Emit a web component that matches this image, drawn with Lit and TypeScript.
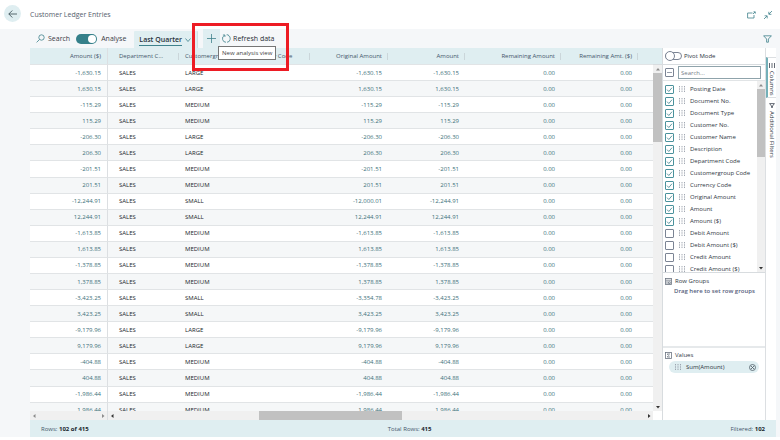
import { LitElement, html, css, svg } from "lit";
import { customElement, property } from "lit/decorators.js";
import { classMap } from "lit/directives/class-map.js";

type Entry = [amount: string, group: string, original?: string];

const PAIRS: Entry[] = [
  ["1,630.15", "LARGE"],
  ["115.29", "MEDIUM"],
  ["206.30", "LARGE"],
  ["201.51", "MEDIUM"],
  ["12,244.91", "SMALL", "-12,000.01"],
  ["1,613.85", "MEDIUM"],
  ["1,378.85", "MEDIUM"],
  ["3,423.25", "SMALL", "-3,354.78"],
  ["9,179.96", "LARGE"],
  ["404.88", "MEDIUM"],
  ["1,986.44", "MEDIUM"],
];

const ROWS = PAIRS.flatMap(([amount, group, original]) => [
  { amount: "-" + amount, group, original: original ?? "-" + amount },
  { amount, group, original: amount },
]);

const FIELDS: [string, boolean][] = [
  ["Posting Date", true],
  ["Document No.", true],
  ["Document Type", true],
  ["Customer No.", true],
  ["Customer Name", true],
  ["Description", true],
  ["Department Code", true],
  ["Customergroup Code", true],
  ["Currency Code", true],
  ["Original Amount", true],
  ["Amount", true],
  ["Amount ($)", true],
  ["Debit Amount", false],
  ["Debit Amount ($)", false],
  ["Credit Amount", false],
  ["Credit Amount ($)", false],
];

const icon = (name: string, w: number, h: number, body: unknown) =>
  html`<svg class="icon ${name}" width=${w} height=${h} viewBox="0 0 ${w} ${h}" aria-hidden="true">${body}</svg>`;

const grip = () =>
  icon("grip", 6, 6, svg`<path d="M.5 0v6M3 0v6M5.5 0v6" stroke-dasharray="1.4 .9" />`);

const shared = css`
  * {
    box-sizing: border-box;
  }
  button,
  input {
    font: inherit;
    color: inherit;
    margin: 0;
    padding: 0;
    border: 0;
    background: none;
  }
  .icon {
    display: block;
    flex: none;
    fill: none;
    stroke: #3f828c;
    stroke-width: 0.8;
  }
  .grip {
    stroke: #8a929e;
  }
`;

@customElement("scroll-bar")
export class ScrollBar extends LitElement {
  static styles = css`
    :host {
      display: flex;
      align-items: center;
      justify-content: space-between;
      background: #f0f0f0;
      min-width: 0;
      min-height: 0;
    }
    :host([vertical]) {
      flex-direction: column;
    }
    .arrow {
      flex: none;
      width: 8px;
      height: 8px;
      fill: #333;
    }
    .track {
      flex: 1;
      align-self: stretch;
      display: flex;
      min-height: 0;
    }
    :host([vertical]) .track {
      flex-direction: column;
    }
    .thumb {
      background: #c1c1c1;
    }
    .faint {
      fill: #8b8b8b;
    }
  `;
  @property({ type: Boolean, reflect: true }) vertical = false;
  @property({ type: Boolean }) idle = false;
  @property({ type: Number }) start = 0;
  @property({ type: Number }) size = 0;

  render() {
    const [a, b] = this.vertical
      ? ["M2 5.5h4L4 3z", "M2 3h4L4 5.5z"]
      : ["M5.5 2v4L3 4z", "M3 2v4l2.500-2z"];
    const arrow = (d: string, faint: boolean) =>
      html`<svg class=${classMap({ arrow: true, faint })} viewBox="0 0 8 8" aria-hidden="true"><path d=${d} /></svg>`;
    return html`
      ${arrow(a, this.idle || this.vertical)}
      <div class="track">
        <div style="flex: 0 0 ${this.start}%"></div>
        <div class="thumb" style="flex: 0 0 ${this.size}%"></div>
      </div>
      ${arrow(b, this.idle)}
    `;
  }
}

@customElement("analysis-toolbar")
export class AnalysisToolbar extends LitElement {
  static styles = [
    shared,
    css`
      :host {
        display: flex;
        align-items: stretch;
        height: 19px;
        padding: 0 8px 0 36px;
        font-size: 7px;
        color: #3c4047;
      }
      button {
        display: flex;
        align-items: center;
        gap: 3px;
      }
      .switch {
        display: flex;
        align-items: center;
        gap: 4px;
        margin: 0 8px 0 6px;
      }
      .toggle {
        appearance: none;
        display: flex;
        justify-content: flex-end;
        align-items: center;
        width: 21px;
        height: 10px;
        padding: 1px;
        border-radius: 5px;
        background: #35808a;
      }
      .toggle::after {
        content: "";
        width: 8px;
        height: 8px;
        border-radius: 50%;
        background: #fff;
      }
      .tab {
        margin: 2px 0 0;
        padding: 0 6px 0 5px;
        background: #dfeef1;
        border-right: 1px solid #d3dee2;
        border-radius: 1px 1px 0 0;
      }
      .name {
        font-weight: 600;
        color: #26303a;
        line-height: 11px;
        border-bottom: 1px solid #3f828c;
      }
      .add {
        position: relative;
        margin-left: 5px;
        width: 17px;
        justify-content: center;
        background: #dfeef1;
      }
      .tip {
        position: absolute;
        left: 15px;
        top: 17px;
        z-index: 2;
        height: 14px;
        padding: 0 3px;
        line-height: 12px;
        white-space: nowrap;
        font-size: 6px;
        color: #444;
        background: #fff;
        border: 1px solid #767676;
      }
      .mark {
        position: absolute;
        left: -11px;
        top: -6px;
        z-index: 3;
        width: 97px;
        height: 48px;
        border: 3px solid #ed1c24;
        pointer-events: none;
      }
      .refresh {
        margin-left: 2px;
        gap: 2px;
        color: #262b33;
      }
      .filter {
        margin-left: auto;
      }
    `,
  ];

  render() {
    return html`
      <button>
        ${icon("find", 9, 9, svg`<circle cx="5.500" cy="3.500" r="2.700" /><path d="M3.500 5.500.6 8.400" />`)}
        Search
      </button>
      <label class="switch"><input class="toggle" type="checkbox" role="switch" checked />Analyse</label>
      <button class="tab">
        <span class="name">Last Quarter</span>
        ${icon("chev", 6, 6, svg`<path d="M.5 1.500 3 4.500l2.500-3" />`)}
      </button>
      <button class="add" aria-label="New analysis view">
        ${icon("plus", 9, 9, svg`<path d="M4.500 0v9M0 4.500h9" />`)}
        <span class="tip" role="tooltip">New analysis view</span>
        <span class="mark"></span>
      </button>
      <button class="refresh">
        ${icon("turn", 9, 9, svg`<path d="M2.500 1.300A3.700 3.700 0 0 0 4 8.300M5 8.300A3.700 3.700 0 0 0 6 1.200M.9 1h2v2M4.600.8h1.700" />`)}
        Refresh data
      </button>
      <button class="filter" aria-label="Filter">
        ${icon("funnel", 9, 8, svg`<path d="M.6.8h7.800L5.400 4v3.200H3.600V4z" />`)}
      </button>
    `;
  }
}

@customElement("ledger-grid")
export class LedgerGrid extends LitElement {
  static styles = [
    shared,
    css`
      :host {
        display: grid;
        grid-template-columns: 78px minmax(0, 1fr) 9px;
        grid-template-rows: 17px minmax(0, 1fr) 9px;
        min-width: 0;
        min-height: 0;
        background: #fff;
      }
      .view {
        grid-area: 1 / 1 / 3 / 3;
        overflow: hidden;
        min-height: 0;
      }
      .corner {
        grid-area: 1 / 3;
        background: #dfeef1;
        border-bottom: 1px solid #d8dcdf;
      }
      .down {
        grid-area: 2 / 3;
      }
      .pinned {
        grid-area: 3 / 1;
        border-right: 1px solid #dcdfe2;
      }
      .across {
        grid-area: 3 / 2;
      }
      table {
        table-layout: fixed;
        border-collapse: separate;
        border-spacing: 0;
        width: 100%;
        height: 371px;
      }
      th,
      td {
        padding: 0 6px;
        text-align: left;
        white-space: nowrap;
        border-bottom: 1px solid #e1e4e6;
      }
      th {
        position: relative;
        height: 17px;
        font-weight: 400;
        color: #44566a;
        background: #dfeef1;
      }
      th::after {
        content: "";
        position: absolute;
        right: 0;
        top: 5px;
        width: 1px;
        height: 7px;
        background: #cbd6da;
      }
      td {
        color: #22262c;
      }
      .num {
        text-align: right;
      }
      td.num {
        color: #3c7079;
      }
      .pin {
        border-right: 1px solid #dcdfe2;
      }
      th.pin::after {
        right: -6px;
      }
      .dept {
        padding-left: 11px;
      }
      th.end::after {
        display: none;
      }
      tbody tr:nth-child(even) {
        background: #f5f7f8;
      }
      .c78 {
        width: 78px;
      }
      .c77 {
        width: 77px;
      }
      .c71 {
        width: 71px;
      }
      .c66 {
        width: 66px;
      }
      .c65 {
        width: 65px;
      }
      .c96 {
        width: 96px;
      }
    `,
  ];

  render() {
    return html`
      <div class="view">
        <table>
          <colgroup>
            <col class="c78" /><col class="c71" /><col class="c66" /><col class="c65" />
            <col class="c78" /><col class="c77" /><col class="c96" /><col class="c77" /><col />
          </colgroup>
          <thead>
            <tr>
              <th class="num pin">Amount ($)</th>
              <th class="dept">Department C...</th>
              <th>Customergroup ...</th>
              <th>Currency Code</th>
              <th class="num">Original Amount</th>
              <th class="num">Amount</th>
              <th class="num">Remaining Amount</th>
              <th class="num">Remaining Amt. ($)</th>
              <th class="end"></th>
            </tr>
          </thead>
          <tbody>
            ${ROWS.map(
              (r) => html`<tr>
                <td class="num pin">${r.amount}</td>
                <td class="dept">SALES</td>
                <td>${r.group}</td>
                <td></td>
                <td class="num">${r.original}</td>
                <td class="num">${r.amount}</td>
                <td class="num">0.00</td>
                <td class="num">0.00</td>
                <td></td>
              </tr>`,
            )}
          </tbody>
        </table>
      </div>
      <div class="corner"></div>
      <scroll-bar class="down" vertical start="0" size="21"></scroll-bar>
      <scroll-bar class="pinned" idle></scroll-bar>
      <scroll-bar class="across" start="27" size="27"></scroll-bar>
    `;
  }
}

@customElement("field-panel")
export class FieldPanel extends LitElement {
  static styles = [
    shared,
    css`
      :host {
        display: flex;
        width: 114px;
        flex: none;
        min-height: 0;
        background: #fff;
        color: #2f3743;
        border-left: 1px solid #d8dcdf;
      }
      .body {
        flex: 1;
        min-width: 0;
        display: flex;
        flex-direction: column;
        border-right: 1px solid #dcdfe2;
      }
      .row {
        display: flex;
        align-items: center;
      }
      .pivot {
        height: 17px;
        flex: none;
        padding-left: 2px;
        gap: 2px;
        border-bottom: 1px solid #d8dcdf;
      }
      .toggle {
        appearance: none;
        width: 17px;
        height: 8px;
        border: 1px solid #7b8494;
        border-radius: 4px;
        display: flex;
        align-items: center;
      }
      .toggle::after {
        content: "";
        width: 8px;
        height: 8px;
        margin-left: -1px;
        flex: none;
        border: 1px solid #7b8494;
        border-radius: 50%;
        background: #fff;
      }
      .search {
        height: 16px;
        flex: none;
        padding: 0 4px 0 2px;
        gap: 4px;
        border-bottom: 1px solid #e1e4e6;
      }
      .query {
        flex: 1;
        min-width: 0;
        height: 13px;
        padding: 0 2px;
        border: 1px solid #8fa3ab;
      }
      .query::placeholder {
        color: #767d87;
        opacity: 1;
      }
      .tick {
        display: grid;
        flex: none;
        width: 9px;
        height: 9px;
      }
      .tick > * {
        grid-area: 1 / 1;
      }
      .box {
        appearance: none;
        width: 9px;
        height: 9px;
        border: 1px solid #7b8494;
        border-radius: 1px;
      }
      .box:checked {
        border-color: #4a929c;
      }
      .mark,
      .dash {
        visibility: hidden;
        pointer-events: none;
      }
      .box:checked + .mark,
      .dash {
        visibility: visible;
      }
      .dash {
        stroke: #7b8494;
      }
      .fields {
        height: 192px;
        flex: none;
        display: flex;
        border-bottom: 1px solid #d8dcdf;
      }
      .list {
        flex: 1;
        min-width: 0;
        overflow: hidden;
        padding: 2px 0 0 2px;
      }
      .field {
        height: 12px;
        gap: 5px;
        white-space: nowrap;
      }
      .bar {
        width: 8px;
        flex: none;
      }
      .zone {
        flex: 1;
        padding: 4px 2px 0;
      }
      .zone + .zone {
        padding-top: 3px;
        border-top: 2px solid #e6e9eb;
      }
      .title {
        height: 8px;
        gap: 3px;
      }
      .title .icon {
        stroke: #6b7480;
      }
      .hint {
        margin: 0;
        padding-left: 9px;
        line-height: 12px;
        font-weight: 600;
        color: #56607c;
      }
      .pill {
        height: 12px;
        margin: 2px 4px 0;
        padding: 0 3px 0 6px;
        gap: 5px;
        border-radius: 6px;
        background: #dfeef1;
      }
      .drop {
        margin-left: auto;
      }
      .drop .icon {
        stroke: #4d5a66;
      }
      .tabs {
        width: 10px;
        flex: none;
        display: flex;
        flex-direction: column;
        padding-top: 9px;
        background: #fff;
      }
      .side {
        display: flex;
        align-items: center;
        gap: 3px;
        writing-mode: vertical-rl;
        width: 10px;
        height: 41px;
        padding-top: 5px;
        border-left: 2px solid transparent;
        border-bottom: 1px solid #dcdfe2;
        white-space: nowrap;
        line-height: 8px;
      }
      .side.on {
        border-left-color: #74b0b8;
        border-top: 1px solid #dcdfe2;
      }
      .side.more {
        height: 62px;
        border-bottom: 0;
      }
      .side .icon {
        stroke: #3c4450;
      }
    `,
  ];

  render() {
    return html`
      <div class="body">
        <label class="row pivot"><input class="toggle" type="checkbox" role="switch" />Pivot Mode</label>
        <div class="row search">
          <label class="tick">
            <input class="box" type="checkbox" aria-label="Select all columns" />
            ${icon("dash", 9, 9, svg`<path d="M2 4.500h5" />`)}
          </label>
          <input class="query" type="text" placeholder="Search..." aria-label="Search columns" />
        </div>
        <div class="fields">
          <div class="list">
            ${FIELDS.map(
              ([name, on]) => html`<label class="row field">
                <span class="tick">
                  <input class="box" type="checkbox" .checked=${on} />
                  ${icon("mark", 9, 9, svg`<path d="m2 4.600 1.800 1.900L7 2.700" />`)}
                </span>
                ${grip()}<span>${name}</span>
              </label>`,
            )}
          </div>
          <scroll-bar class="bar" vertical start="0" size="39"></scroll-bar>
        </div>
        <section class="zone">
          <div class="row title">
            ${icon("group", 7, 7, svg`<rect x=".5" y=".5" width="6" height="6" /><path d="M1 2.200h5M2 3v3M3.500 3.800h1.800v1.700H3.500z" />`)}
            Row Groups
          </div>
          <p class="hint">Drag here to set row groups</p>
        </section>
        <section class="zone">
          <div class="row title">
            ${icon("sum", 7, 7, svg`<rect x=".5" y=".5" width="6" height="6" /><path d="M5 2H2.200l1.500 1.500L2.200 5H5" />`)}
            Values
          </div>
          <div class="row pill">
            ${grip()}<span>Sum(Amount)</span>
            <button class="drop" aria-label="Remove value">
              ${icon("x", 7, 7, svg`<circle cx="3.500" cy="3.500" r="3" /><path d="m2 2 3 3M5 2 2 5" />`)}
            </button>
          </div>
        </section>
      </div>
      <div class="tabs">
        <button class="side on">
          ${icon("cols", 6, 5, svg`<path d="M.5 0v5M3 0v5M5.500 0v5" />`)}Columns
        </button>
        <button class="side more">
          ${icon("tri", 6, 5, svg`<path d="M.6.6h4.800L3.500 3v1.500h-1V3z" />`)}Additional Filters
        </button>
      </div>
    `;
  }
}

@customElement("app-root")
export class AppRoot extends LitElement {
  static styles = [
    shared,
    css`
      :host {
        display: flex;
        flex-direction: column;
        height: 100vh;
        background: #fff;
        font: 6px/8px "Open Sans", "Noto Sans", sans-serif;
      }
      .top {
        display: flex;
        align-items: center;
        height: 29px;
        flex: none;
        padding: 0 8px 0 4px;
      }
      .back {
        display: grid;
        place-items: center;
        width: 17px;
        height: 17px;
        margin-right: 9px;
        margin-bottom: 2px;
        border-radius: 50%;
        background: #dfeef1;
      }
      .back .icon {
        stroke: #33474f;
      }
      h1 {
        margin: 0;
        font-size: 7px;
        font-weight: 400;
        color: #56606e;
      }
      .tools {
        display: flex;
        gap: 8px;
        margin-left: auto;
      }
      .page {
        flex: 1;
        min-height: 0;
        display: flex;
        flex-direction: column;
        margin-bottom: 3px;
        background: #f5f7f9;
      }
      .work {
        flex: 1;
        min-height: 0;
        display: flex;
        margin: 0 4px 0 30px;
      }
      ledger-grid {
        flex: 1;
      }
      footer {
        display: flex;
        justify-content: space-between;
        align-items: center;
        height: 17px;
        flex: none;
        margin: 0 4px 0 30px;
        padding: 0 11px;
        color: #44566a;
        background: #dfeef1;
      }
      b {
        color: #20262e;
      }
    `,
  ];

  render() {
    return html`
      <header class="top">
        <button class="back" aria-label="Back">
          ${icon("arrow", 9, 8, svg`<path d="M9 4H.8M4.300.5.8 4l3.500 3.500" />`)}
        </button>
        <h1>Customer Ledger Entries</h1>
        <div class="tools">
          <button aria-label="Open in new window">
            ${icon("pop", 9, 8, svg`<path d="M5.500 2H.6v5h6.400V4M6 3l2-2M6.500.8H8.300v1.800" />`)}
          </button>
          <button aria-label="Collapse">
            ${icon("shrink", 8, 8, svg`<path d="M8 0 5 3M0 8l3-3M4.800.8v2.500h2.600M.6 4.800h2.600v2.600" />`)}
          </button>
        </div>
      </header>
      <main class="page">
        <analysis-toolbar></analysis-toolbar>
        <div class="work">
          <ledger-grid></ledger-grid>
          <field-panel></field-panel>
        </div>
        <footer>
          <span>Rows: <b>102 of 415</b></span>
          <span>Total Rows: <b>415</b></span>
          <span>Filtered: <b>102</b></span>
        </footer>
      </main>
    `;
  }
}
